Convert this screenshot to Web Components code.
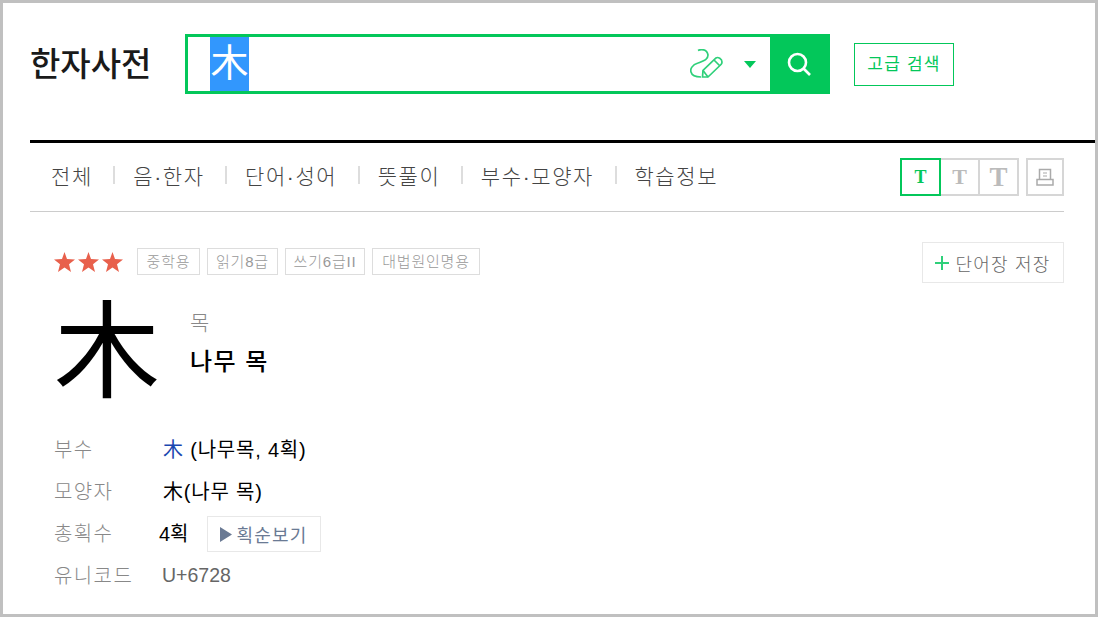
<!DOCTYPE html>
<html lang="ko">
<head>
<meta charset="utf-8">
<title>한자사전</title>
<style>
  html, body { margin: 0; padding: 0; background: #fff; }
  body { font-family: "Liberation Sans", "Noto Sans CJK KR", sans-serif; }
</style>
</head>
<body>
<dict-page>
  <dict-header></dict-header>
  <dict-nav></dict-nav>
  <dict-entry></dict-entry>
</dict-page>

<script>
const FONT = `"Liberation Sans", "Noto Sans CJK KR", sans-serif`;

customElements.define("dict-page", class extends HTMLElement {
  constructor() {
    super();
    const shadow = this.attachShadow({ mode: 'open' });
    shadow.innerHTML = `
      <style>
        :host {
          display: block;
          width: 1098px;
          height: 617px;
          box-sizing: border-box;
          border: 3px solid #c0c0c0;
          padding-left: 27px;
          overflow: hidden;
          background: #fff;
          font-family: ${FONT};
        }
      </style>
      <slot></slot>
    `;
  }
});

customElements.define("dict-header", class extends HTMLElement {
  constructor() {
    super();
    const shadow = this.attachShadow({ mode: 'open' });
    shadow.innerHTML = `
      <style>
        :host {
          display: flex;
          align-items: flex-start;
          box-sizing: border-box;
          padding-top: 31px;
          border-bottom: 3px solid #000;
          height: 140px;
        }
        .logo {
          width: 155px;
          height: 60px;
          line-height: 62px;
          font-size: 33px;
          font-weight: 500;
          letter-spacing: 0;
          color: #1a1a1a;
          white-space: nowrap;
        }
        .search {
          display: flex;
          width: 645px;
          height: 60px;
          box-sizing: border-box;
          border: 3px solid #03c75a;
        }
        .field {
          flex: 1;
          display: flex;
          align-items: stretch;
          padding-left: 22px;
        }
        .selected {
          width: 39px;
          background: #3297fd;
          color: #fff;
          font-size: 38px;
          line-height: 52px;
          text-align: center;
        }
        .tools {
          margin-left: auto;
          display: flex;
          align-items: center;
          padding-right: 14px;
          gap: 20px;
        }
        .go {
          width: 57px;
          background: #03c75a;
          display: flex;
          align-items: center;
          justify-content: center;
        }
        .adv {
          margin: 9px 0 0 24px;
          width: 100px;
          height: 43px;
          box-sizing: border-box;
          border: 1px solid #03c75a;
          color: #03c75a;
          font-size: 17px;
          letter-spacing: 1.2px;
          line-height: 41px;
          text-align: center;
          white-space: nowrap;
        }
      </style>
      <div class="logo">한자사전</div>
      <div class="search">
        <div class="field">
          <span class="selected">木</span>
          <div class="tools">
            <svg width="34" height="30" viewBox="0 0 34 30" fill="none" stroke="#2fd07a" stroke-width="1.7">
              <path d="M8 1.5 C11 0 17 0 18 6 C18 11 13 12 8 14 C2 16 0 20 1 23 C2 27 6 28 11 28"/>
              <path d="M12.5 28 L13 21.5 L26 9 C28 7.5 32 10 32 13 C32 14 31.5 15 31 15.5 L18 28 Z"/>
              <path d="M24 11 L30 17 M13 21.5 L18 28"/>
            </svg>
            <svg width="12" height="7" viewBox="0 0 12 7"><path d="M0 0H12L6 7Z" fill="#03c75a"/></svg>
          </div>
        </div>
        <div class="go">
          <svg width="26" height="26" viewBox="0 0 26 26" fill="none" stroke="#fff" stroke-width="2.6">
            <circle cx="11.5" cy="11.5" r="8.5"/>
            <path d="M17.5 17.5 L24 24"/>
          </svg>
        </div>
      </div>
      <div class="adv">고급 검색</div>
    `;
  }
});

customElements.define("dict-nav", class extends HTMLElement {
  constructor() {
    super();
    const shadow = this.attachShadow({ mode: 'open' });
    const tabs = ['전체', '음·한자', '단어·성어', '뜻풀이', '부수·모양자', '학습정보'];
    shadow.innerHTML = `
      <style>
        :host {
          display: flex;
          align-items: center;
          width: 1034px;
          height: 69px;
          box-sizing: border-box;
          border-bottom: 1px solid #ccc;
          padding: 0 0 0 21px;
        }
        ul { display: flex; margin: 0; padding: 0; list-style: none; }
        li {
          font-size: 21px;
          font-weight: 300;
          line-height: 24px;
          color: #444;
          white-space: nowrap;
          letter-spacing: 1.6px;
        }
        li + li { margin-left: 20.6px; padding-left: 19.8px; position: relative; }
        li + li::before {
          content: "";
          position: absolute;
          left: 0;
          top: 1px;
          width: 2px;
          height: 18px;
          background: #ddd;
        }
        .sizes { margin-left: auto; display: flex; align-items: center; }
        .sz {
          width: 41px;
          height: 38px;
          box-sizing: border-box;
          border: 2px solid #d6d6d6;
          display: flex;
          align-items: center;
          justify-content: center;
          font-family: "Liberation Serif", serif;
          font-weight: bold;
          color: #bbb;
        }
        .sz + .sz { margin-left: -2px; }
        .sz.on { border-color: #03c75a; color: #03c75a; font-size: 18px; position: relative; }
        .sz.print { margin-left: 7px; width: 38px; }
      </style>
      <ul>${tabs.map(t => `<li>${t}</li>`).join('')}</ul>
      <div class="sizes">
        <span class="sz on">T</span>
        <span class="sz" style="font-size:22px">T</span>
        <span class="sz" style="font-size:27px">T</span>
        <span class="sz print">
          <svg width="18" height="18" viewBox="0 0 18 18" fill="none" stroke="#aaa" stroke-width="1.5">
            <path d="M3.5 11.5V1.5h11v10"/>
            <rect x="1" y="11.5" width="16" height="5.5"/>
            <path d="M7 5h4M7 8h4" stroke-width="1.2"/>
          </svg>
        </span>
      </div>
    `;
  }
});

customElements.define("dict-tag", class extends HTMLElement {
  constructor() {
    super();
    const shadow = this.attachShadow({ mode: 'open' });
    shadow.innerHTML = `
      <style>
        :host {
          display: block;
          height: 27px;
          box-sizing: border-box;
          border: 1px solid #ddd;
          text-align: center;
          font-size: 15px;
          font-weight: 300;
          letter-spacing: 0.8px;
          line-height: 25px;
          color: #999;
          white-space: nowrap;
        }
      </style>
      <slot></slot>
    `;
  }
});

customElements.define("dict-row", class extends HTMLElement {
  constructor() {
    super();
    const shadow = this.attachShadow({ mode: 'open' });
    shadow.innerHTML = `
      <style>
        :host {
          display: flex;
          align-items: center;
          height: 42px;
          font-size: 20px;
          color: #000;
          white-space: nowrap;
        }
        .label { width: 109px; color: #888; flex: none; letter-spacing: 1.4px; font-weight: 300; }
      </style>
      <span class="label">${this.getAttribute('label')}</span>
      <slot></slot>
    `;
  }
});

customElements.define("dict-entry", class extends HTMLElement {
  constructor() {
    super();
    const shadow = this.attachShadow({ mode: 'open' });
    shadow.innerHTML = `
      <style>
        :host { display: block; width: 1034px; padding: 30px 0 0 24px; box-sizing: border-box; }
        .top { display: flex; align-items: flex-start; }
        .stars {
          width: 83px;
          height: 27px;
          display: flex;
          align-items: center;
          margin-top: 6px;
        }
        .stars svg { display: block; }
        .tags { display: flex; gap: 7px; margin-top: 6px; }
        .save {
          margin-left: auto;
          width: 142px;
          height: 41px;
          box-sizing: border-box;
          border: 1px solid #e8e8e8;
          display: flex;
          align-items: center;
          justify-content: center;
          gap: 6px;
          font-size: 18px;
          font-weight: 300;
          letter-spacing: 1.2px;
          color: #666;
          white-space: nowrap;
        }
        .word { display: flex; margin-top: 10px; height: 126px; }
        .hanja {
          width: 136px;
          font-size: 106px;
          line-height: 118px;
          color: #000;
          box-sizing: border-box;
        }
        .read { padding-top: 18px; }
        .sound { font-size: 21px; font-weight: 300; line-height: 24px; color: #888; }
        .mean { font-size: 24px; line-height: 28px; letter-spacing: 1.5px; color: #000; margin-top: 13px; font-weight: 500; }
        .rows { margin-top: 8px; }
        .val { letter-spacing: 0.8px; }
        a { color: #1a47b0; text-decoration: none; }
        .stroke {
          margin: 4px 0 0 18px;
          width: 114px;
          height: 36px;
          box-sizing: border-box;
          border: 1px solid #e8e8e8;
          display: flex;
          align-items: center;
          justify-content: center;
          gap: 5px;
          color: #6a7a94;
          font-size: 18px;
          letter-spacing: 1.2px;
        }
        .code { color: #666; font-size: 19.5px; margin-left: -1px; padding-top: 2px; }
      </style>
      <div class="top">
        <div class="stars">
          <svg width="69" height="20" viewBox="0 0 69 20" fill="#e8604c">
            <path d="M10.5 0 L13 7 L21 7.5 L15 12.2 L17 20 L10.5 15.6 L4 20 L6 12.2 L0 7.5 L8 7 Z"/>
            <path transform="translate(24 0)" d="M10.5 0 L13 7 L21 7.5 L15 12.2 L17 20 L10.5 15.6 L4 20 L6 12.2 L0 7.5 L8 7 Z"/>
            <path transform="translate(48 0)" d="M10.5 0 L13 7 L21 7.5 L15 12.2 L17 20 L10.5 15.6 L4 20 L6 12.2 L0 7.5 L8 7 Z"/>
          </svg>
        </div>
        <div class="tags">
          <dict-tag style="width:63px">중학용</dict-tag>
          <dict-tag style="width:71px">읽기8급</dict-tag>
          <dict-tag style="width:80px">쓰기6급II</dict-tag>
          <dict-tag style="width:108px">대법원인명용</dict-tag>
        </div>
        <div class="save">
          <svg width="14" height="14" viewBox="0 0 14 14"><path d="M6 0h2v6h6v2H8v6H6V8H0V6h6z" fill="#2fd07a"/></svg>
          단어장 저장
        </div>
      </div>
      <div class="word">
        <div class="hanja">木</div>
        <div class="read">
          <div class="sound">목</div>
          <div class="mean">나무 목</div>
        </div>
      </div>
      <div class="rows">
        <dict-row label="부수"><span class="val"><a>木</a> (나무목, 4획)</span></dict-row>
        <dict-row label="모양자"><span class="val">木(나무 목)</span></dict-row>
        <dict-row label="총획수">
          <span style="margin-left:-4px">4획</span>
          <div class="stroke">
            <svg width="12" height="15" viewBox="0 0 12 15"><path d="M0 0L12 7.5L0 15Z" fill="#6a7a94"/></svg>
            획순보기
          </div>
        </dict-row>
        <dict-row label="유니코드"><span class="code">U+6728</span></dict-row>
      </div>
    `;
  }
});
</script>
</body>
</html>
